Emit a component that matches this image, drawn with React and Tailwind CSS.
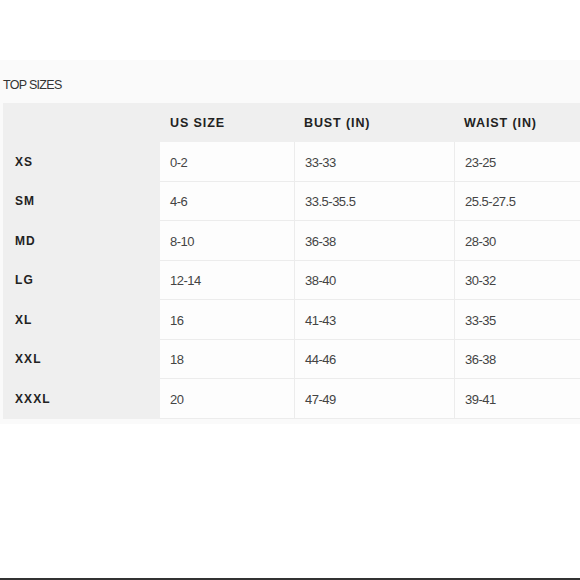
import React from 'react';

const rows = [
    ['XS', '0-2', '33-33', '23-25'],
    ['SM', '4-6', '33.5-35.5', '25.5-27.5'],
    ['MD', '8-10', '36-38', '28-30'],
    ['LG', '12-14', '38-40', '30-32'],
    ['XL', '16', '41-43', '33-35'],
    ['XXL', '18', '44-46', '36-38'],
    ['XXXL', '20', '47-49', '39-41'],
];

const cols = 'grid grid-cols-[157px_134px_160px_126px]';

const App = () => {
    return (
        <div className="w-[580px] h-[580px] bg-white flex flex-col font-['Liberation_Sans',Arial,sans-serif]">
            <div className="h-[60px]" />
            <div className="h-[364px] bg-[#fafafa] pl-[3px] flex flex-col">
                <div className="h-[43px] pt-[16px] text-[12.5px] text-[#333] tracking-[-0.7px]">TOP SIZES</div>
                <div className="bg-[#efefef]">
                    <div className={`${cols} h-[39px] items-center`}>
                        <div />
                        {['US SIZE', 'BUST (IN)', 'WAIST (IN)'].map((h) => (
                            <div key={h} className="pl-[10px] pt-[2px] text-[12.5px] font-bold tracking-[0.9px] text-[#222]">
                                {h}
                            </div>
                        ))}
                    </div>
                    {rows.map((r) => (
                        <div key={r[0]} className={`${cols} h-[39.5px]`}>
                            <div className="pl-[12px] flex items-center text-[12px] font-bold tracking-[1.1px] text-[#222]">
                                {r[0]}
                            </div>
                            {r.slice(1).map((v, i) => (
                                <div
                                    key={i}
                                    className={`bg-[#fdfdfd] border-b border-[#ececec] pl-[10px] pt-[2px] flex items-center text-[13px] tracking-[-0.5px] text-[#444] ${i > 0 ? 'border-l' : ''}`}
                                >
                                    {v}
                                </div>
                            ))}
                        </div>
                    ))}
                </div>
            </div>
            <div className="flex-1" />
            <div className="h-[2px] bg-[#333]" />
        </div>
    );
};

export default App;
